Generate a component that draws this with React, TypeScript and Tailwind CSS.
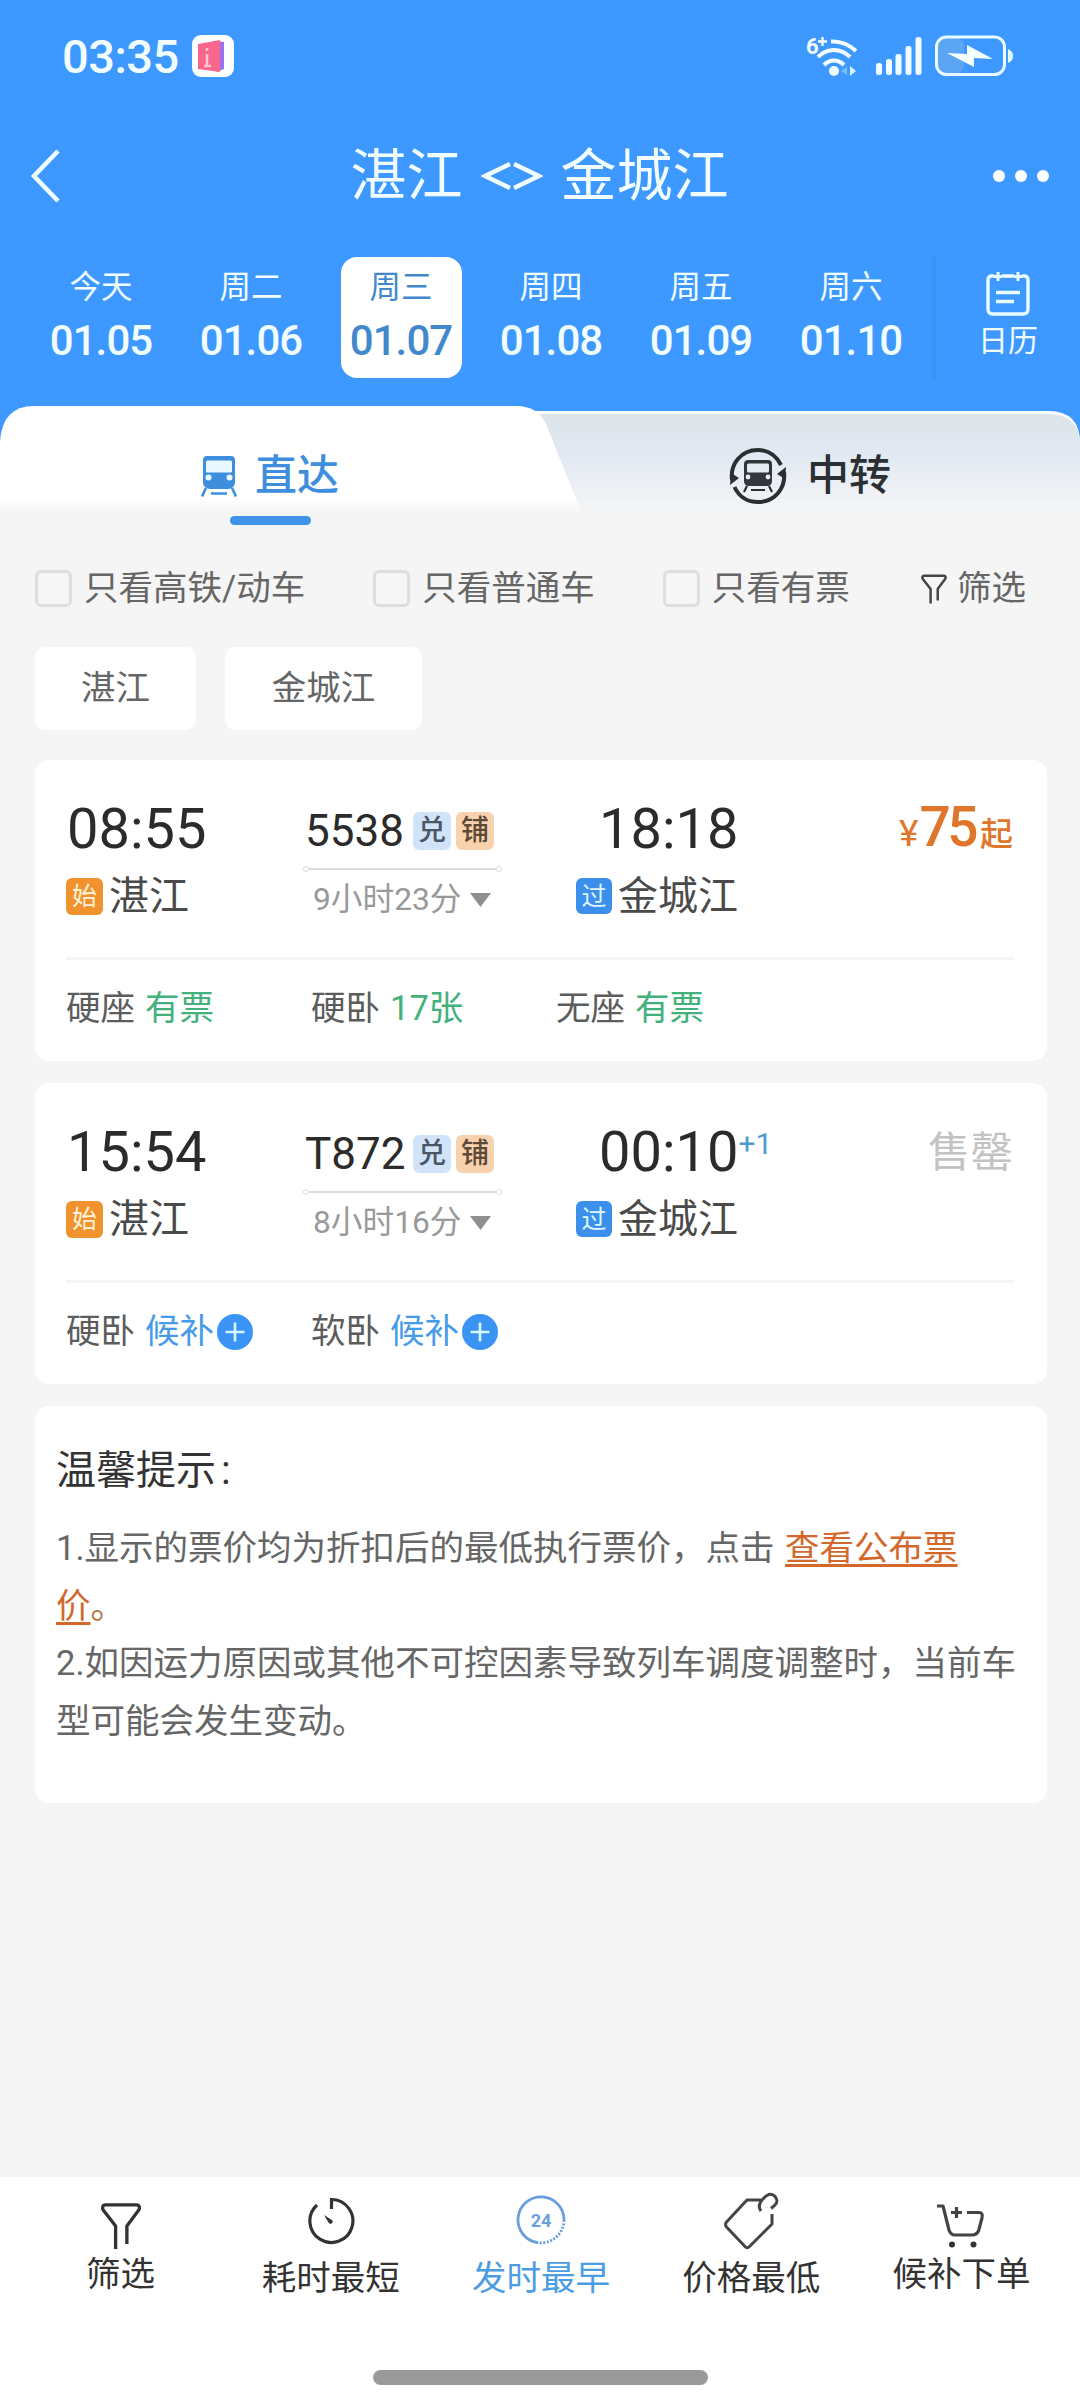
import React, { useState } from 'react';

type Seat = { name: string; value: string; waitlist?: boolean };

type Train = {
  code: string;
  depart: string;
  arrive: string;
  nextDay?: boolean;
  duration: string;
  price?: number;
  seats: Seat[];
};

const days = [
  { label: '今天', date: '01.05' },
  { label: '周二', date: '01.06' },
  { label: '周三', date: '01.07' },
  { label: '周四', date: '01.08' },
  { label: '周五', date: '01.09' },
  { label: '周六', date: '01.10' },
];

const trains: Train[] = [
  {
    code: '5538',
    depart: '08:55',
    arrive: '18:18',
    duration: '9小时23分',
    price: 75,
    seats: [
      { name: '硬座', value: '有票' },
      { name: '硬卧', value: '17张' },
      { name: '无座', value: '有票' },
    ],
  },
  {
    code: 'T872',
    depart: '15:54',
    arrive: '00:10',
    nextDay: true,
    duration: '8小时16分',
    seats: [
      { name: '硬卧', value: '候补', waitlist: true },
      { name: '软卧', value: '候补', waitlist: true },
    ],
  },
];

function WifiIcon() {
  return (
    <svg width="52" height="42" viewBox="0 0 52 42" fill="none" stroke="#f2fdff" strokeWidth="4">
      <path d="M25 6.500C34 6 43 9.500 50 16" />
      <path d="M12 22C21 12.500 35 12.500 44 22" />
      <path d="M18 30C24 24 32 24 38 30" />
      <circle cx="28" cy="36" r="5" fill="#f2fdff" stroke="none" />
      <path d="M41 32v8l-6-4z" fill="#7fbcfb" stroke="none" />
      <path d="M44 31l6 5-6 5z" fill="#d5f2ff" stroke="none" />
      <text x="0" y="19" fontSize="22" fontWeight="700" fill="#f2fdff" stroke="none" fontFamily="Roboto">6</text>
      <path d="M12 6.500h9M16.500 2v9" strokeWidth="2.500" />
    </svg>
  );
}

function SignalIcon() {
  return (
    <svg width="46" height="38" viewBox="0 0 46 38" fill="#f2fdff">
      <rect x="0" y="26" width="6" height="12" rx="2.500" />
      <rect x="10" y="22" width="6" height="16" rx="2.500" />
      <rect x="19.500" y="17" width="6" height="21" rx="2.500" />
      <rect x="29.500" y="9" width="6" height="29" rx="2.500" />
      <rect x="39.500" y="0" width="6" height="38" rx="2.500" />
    </svg>
  );
}

function BatteryIcon() {
  return (
    <svg width="78" height="42" viewBox="0 0 78 42" fill="none">
      <rect x="3" y="3" width="26" height="35" rx="8" fill="#5ba5f3" />
      <rect x="1.500" y="2" width="68" height="37.500" rx="10" stroke="#e8fbff" strokeWidth="3" />
      <path d="M73 14c4 2 5 4 5 7s-1 5-5 7z" fill="#e8fbff" />
      <path d="M12 18l20 1V10l26 14-19-1v9z" fill="#f6ffff" />
    </svg>
  );
}

function TrainIcon({ className, hole }: { className?: string; hole: string }) {
  return (
    <svg className={className} viewBox="0 0 36 41" fill="none">
      <path d="M6 0h24c3 0 4 2 4 4v22c0 4-3 7-7 7H9c-4 0-7-3-7-7V4c0-2 1-4 4-4z" fill="currentColor" />
      <rect x="5" y="4.500" width="26" height="12" rx="1.500" fill={hole} />
      <circle cx="7.500" cy="21.500" r="3" fill={hole} />
      <circle cx="28.500" cy="21.500" r="3" fill={hole} />
      <path d="M5 32L1 40.500M31 32l4 8.500M10 37.500h16" stroke="currentColor" strokeWidth="2.600" />
    </svg>
  );
}

function TransferIcon() {
  return (
    <svg width="58" height="58" viewBox="0 0 58 58" fill="none" stroke="#2b2f33" strokeWidth="4">
      <path d="M3 33C1 17 12 3 29 3c10 0 18 5.500 23 15" />
      <path d="M55 25c2 16-9 30-26 30C19 55 10 50 5.500 40" />
      <path d="M1 38l1-12 8 5z" fill="#2b2f33" stroke="none" />
      <path d="M57 20l-1 12-8-5z" fill="#2b2f33" stroke="none" />
      <path d="M19 13h20c2.500 0 4 1.500 4 4v17c0 3-2 5-5 5H20c-3 0-5-2-5-5V17c0-2.500 1.500-4 4-4z" fill="#33373b" stroke="none" />
      <rect x="18" y="16.500" width="22" height="9" rx="1.500" fill="#e6ebf2" stroke="none" />
      <circle cx="19" cy="30" r="2.400" fill="#e6ebf2" stroke="none" />
      <circle cx="39" cy="30" r="2.400" fill="#e6ebf2" stroke="none" />
      <path d="M18 39l-3 6M40 39l3 6M22 43h14" strokeWidth="2.200" />
    </svg>
  );
}

function FunnelIcon({ className, strokeWidth }: { className?: string; strokeWidth: number }) {
  return (
    <svg
      className={className}
      viewBox="0 0 42 47"
      fill="none"
      stroke="currentColor"
      strokeWidth={strokeWidth}
      strokeLinejoin="round"
    >
      <path d="M15.500 47V23.500L3 7.500C1.500 5 2 2 5 2h32c3 0 3.500 3 2 5.500L27 23.500V42" />
    </svg>
  );
}

function CalendarIcon() {
  return (
    <svg width="44" height="44" viewBox="0 0 44 44" fill="none" stroke="#e9fcff" strokeWidth="3.400">
      <path d="M8 4H6C3.500 4 2 5.500 2 8v29c0 3 1.500 5 5 5h30c3.500 0 5-2 5-5V8c0-2.500-1.500-4-4-4h-2M16 4h12" />
      <path d="M8 4.500h8M28 4.500h8M12 0v9M32 0v9" strokeWidth="3" />
      <path d="M10 20.500h24M10 29.500h18" />
    </svg>
  );
}

function StopwatchIcon() {
  return (
    <svg width="48" height="48" viewBox="0 0 48 48" fill="none" stroke="#333" strokeWidth="3.200">
      <path d="M24.500 12V2.500A21.500 21.500 0 1 1 10 8" />
      <path d="M17 18l4.500 7.500a2 2 0 0 0 4-2z" fill="#333" stroke="none" />
    </svg>
  );
}

function Clock24Icon() {
  return (
    <svg width="50" height="50" viewBox="0 0 50 50" fill="none" stroke="#6b9fdc" strokeWidth="2.800">
      <path d="M21 47.500A23 23 0 1 1 48 25" />
      <path d="M48 25A23 23 0 0 1 21 47.500" strokeDasharray="2 1.500" />
      <text x="25" y="31.500" textAnchor="middle" fontSize="18" fontWeight="700" fill="#6b9fdc" stroke="none" fontFamily="Roboto">24</text>
    </svg>
  );
}

function TagIcon() {
  return (
    <svg width="56" height="58" viewBox="0 0 56 58" fill="none" stroke="#444" strokeWidth="3" strokeLinejoin="round">
      <path d="M38 8H24L3.500 30c-1.500 2-1.500 3 0 5L22 54.500c1.500 1.500 3 1.500 4.500 0L49 32V22" />
      <path d="M38 19c-3-4-2-8 2-12 4-5 8-6 11.500-3s3 7 0 9.500l-3.500 3" />
    </svg>
  );
}

function CartIcon() {
  return (
    <svg width="48" height="44" viewBox="0 0 48 44" fill="none" stroke="#444" strokeWidth="3.200" strokeLinejoin="round">
      <path d="M0 2h6l6 24c1 3 3 5 6 5h17c3 0 5-1 6.500-4L45 14c1-4-.5-5.500-3-5.500H30" />
      <path d="M14 8.500h11M19.500 3v11" />
      <circle cx="15" cy="40.500" r="3" fill="#333" stroke="none" />
      <circle cx="36.500" cy="40.500" r="3" fill="#333" stroke="none" />
    </svg>
  );
}

function Checkbox({ label }: { label: string }) {
  return (
    <label className="flex items-center gap-3">
      <span className="h-[37px] w-[37px] rounded-md border-[3px] border-[#dedede] bg-[#f6f6f6]" />
      <span className="leading-none">{label}</span>
    </label>
  );
}

function TrainCard({ train }: { train: Train }) {
  return (
    <div className="flex h-[301px] flex-col rounded-[14px] bg-white pl-[31px] pr-[34px]">
      <div className="flex h-[197px] pt-[40px]">
        <div className="w-[237px]">
          <div className="flex h-[56px] items-center pl-px pt-0.5 text-[56px] leading-none text-[#2b2b2b]">{train.depart}</div>
          <div className="mt-[21px] flex h-[38px] items-center gap-1.5">
            <span className="flex h-[37px] w-[37px] items-center justify-center rounded-md bg-[#f0932f] text-[25px] leading-none text-[#fff3dc]">
              始
            </span>
            <span className="pt-0.5 text-[40px] leading-none text-[#4a4a4a]">湛江</span>
          </div>
        </div>

        <div className="w-[273px]">
          <div className="flex h-[62px] items-center pl-0.5">
            <span className="w-[108px] text-[44px] leading-none text-[#2b2b2b]">{train.code}</span>
            <span className="flex h-[38px] w-[38px] items-center justify-center rounded-md bg-[#d0e3f9] text-[28px] font-medium leading-none text-[#4a5664]">
              兑
            </span>
            <span className="ml-[5px] flex h-[38px] w-[38px] items-center justify-center rounded-md bg-[#f8d2ae] text-[28px] font-medium leading-none text-[#5d4936]">
              铺
            </span>
          </div>
          <div className="mt-1 flex w-[199px] items-center">
            <span className="h-1.5 w-1.5 rounded-full border border-[#dcdcdc]" />
            <span className="h-0.5 flex-1 bg-[#dcdcdc]" />
            <span className="h-1.5 w-1.5 rounded-full border border-[#dcdcdc]" />
          </div>
          <div className="flex items-center gap-2 pl-2.5 pt-3 text-[31.700px] leading-none text-[#999]">
            <span>{train.duration}</span>
            <svg width="21" height="14" viewBox="0 0 21 14" fill="#8f8f8f">
              <path d="M0 0h21L10.500 14z" />
            </svg>
          </div>
        </div>

        <div className="flex-1">
          <div className="flex h-[56px] items-center pl-[23px] pt-0.5 text-[56px] leading-none text-[#2b2b2b]">
            {train.arrive}
            {train.nextDay && <span className="mb-4 text-[30px] leading-none text-[#4f9bd0]">+1</span>}
          </div>
          <div className="mt-[21px] flex h-[38px] items-center gap-1.5">
            <span className="flex h-[36px] w-[36px] items-center justify-center rounded-md bg-[#3c90ec] text-[25px] leading-none text-[#dff6ff]">
              过
            </span>
            <span className="pt-0.5 text-[40px] leading-none text-[#4a4a4a]">金城江</span>
          </div>
        </div>

        {train.price ? (
          <div className="flex h-[56px] items-baseline text-[#df762b]">
            <span className="pr-px text-[37px] leading-none">¥</span>
            <span className="text-[55px] font-medium leading-none tracking-[-3.500px]">{train.price}</span>
            <span className="pl-[5px] text-[33px] font-medium leading-none">起</span>
          </div>
        ) : (
          <div className="flex h-[56px] items-center pt-1 text-[42.500px] leading-none text-[#c3c3c3]">售罄</div>
        )}
      </div>

      <div className="h-[3px] bg-[#f5f5f5]" />

      <div className="flex h-[96px] items-center pt-px text-[34.5px] leading-none">
        {train.seats.map((seat) => (
          <div key={seat.name} className="flex w-[245px] items-center">
            <span className="text-[#5c5c5c]">{seat.name}</span>
            {seat.waitlist ? (
              <>
                <span className="ml-2.5 text-[#459be8]">{seat.value}</span>
                <svg className="ml-[3px]" width="36" height="36" viewBox="0 0 36 36" fill="none">
                  <circle cx="18" cy="18" r="18" fill="#3a93f5" />
                  <path d="M8.500 18h19M18 8.500v19" stroke="#d9f6ff" strokeWidth="2.600" />
                </svg>
              </>
            ) : (
              <span className="ml-2.5 text-[#42b17c]">{seat.value}</span>
            )}
          </div>
        ))}
      </div>
    </div>
  );
}

export default function App() {
  const [selected, setSelected] = useState('01.07');

  return (
    <div className="flex h-[2403px] w-[1080px] flex-col overflow-hidden bg-[#f5f5f5] font-[Roboto,'Noto_Sans_CJK_SC',sans-serif]">
      {/* Header */}
      <header className="h-[406px] shrink-0 bg-[#3d99ff] text-[#f2fdff]">
        <div className="flex h-[112px] items-center pl-[62px] pr-[67px]">
          <span className="w-[118px] text-[47px] font-medium leading-none tracking-[-0.500px]">03:35</span>
          <svg className="ml-3" width="42" height="42" viewBox="0 0 42 42">
            <rect width="42" height="42" rx="9" fill="#fff" />
            <path d="M24 6l8 1v27l-8 3z" fill="#9a70ee" />
            <path d="M6 9l22-4v32L6 34z" fill="#f9668c" />
            <path d="M15 13v3M15 19v12M12 31h7" stroke="#ffc4d2" strokeWidth="2.600" />
          </svg>
          <div className="flex-1" />
          <WifiIcon />
          <div className="w-[18px]" />
          <SignalIcon />
          <div className="w-[13px]" />
          <BatteryIcon />
        </div>

        <div className="flex h-[128px] items-center justify-between pl-[30px] pr-[31px]">
          <svg width="30" height="54" viewBox="0 0 30 54" fill="none" stroke="#f2fdff" strokeWidth="4.500">
            <path d="M28 2L4 27l24 25" />
          </svg>
          <h1 className="flex items-center gap-[18px] pl-7 text-[56px] leading-none">
            <span>湛江</span>
            <svg width="62" height="28" viewBox="0 0 62 28" fill="none" stroke="#f2fdff" strokeWidth="4.500">
              <path d="M29 2L4 14l25 12M33 2l25 12-25 12" />
            </svg>
            <span>金城江</span>
          </h1>
          <svg width="58" height="14" viewBox="0 0 58 14" fill="#fff">
            <circle cx="8" cy="7" r="6" />
            <circle cx="30" cy="7" r="6" />
            <circle cx="52" cy="7" r="6" />
          </svg>
        </div>

        <div className="flex pl-[26px] pt-[17px]">
          {days.map((day) => (
            <div key={day.date} className="flex w-[150px] justify-center">
              <button
                onClick={() => setSelected(day.date)}
                className={
                  selected === day.date
                    ? 'flex h-[121px] w-[121px] flex-col items-center rounded-2xl bg-white pt-[15px] text-[#4288cc]'
                    : 'flex h-[121px] w-[121px] flex-col items-center pt-[15px]'
                }
              >
                <span className="text-[31.5px] leading-8">{day.label}</span>
                <span className="mt-4 text-[42px] font-medium leading-[42px] tracking-[-0.900px]">{day.date}</span>
              </button>
            </div>
          ))}
          <div className="ml-1 h-[124px] w-1.5 bg-linear-to-r from-[#3d99ff] to-[#3790f2]" />
          <div className="flex flex-1 flex-col items-center pt-[15px]">
            <CalendarIcon />
            <span className="mt-[9px] text-[30px] leading-8">日历</span>
          </div>
        </div>
      </header>

      {/* Tabs */}
      <div className="relative flex h-[136px] shrink-0">
        <svg className="absolute left-0 top-0" width="1080" height="136" viewBox="0 0 1080 136">
          <defs>
            <linearGradient id="inactive" x1="0" y1="0" x2="0" y2="1">
              <stop offset="0" stopColor="#dde3e9" />
              <stop offset="0.400" stopColor="#e2e9f2" />
              <stop offset="1" stopColor="#f4f5f6" />
            </linearGradient>
            <linearGradient id="active" x1="0" y1="0" x2="0" y2="1">
              <stop offset="0.850" stopColor="#fff" />
              <stop offset="1" stopColor="#f5f5f5" />
            </linearGradient>
          </defs>
          <rect width="1080" height="40" fill="#3d99ff" />
          <path d="M400 5h648q32 0 32 32v70H400z" fill="#fff" />
          <path d="M400 8h648q32 0 32 32v68H400z" fill="url(#inactive)" />
          <path d="M0 36Q2 0 34 0h482q22 0 30 18l36 90H0z" fill="url(#active)" />
        </svg>
        <div className="relative flex w-[540px] flex-col items-center">
          <div className="flex h-[110px] items-center pt-[30px] text-[42px] font-medium leading-none text-[#3d8fdd]">
            <TrainIcon className="mr-[18px] h-[41px] w-[36px]" hole="#e9f8ff" />
            <span>直达</span>
          </div>
          <div className="h-[9px] w-[81px] rounded-full bg-[#3f93e8]" />
        </div>
        <div className="relative flex h-[110px] flex-1 items-center justify-center pt-[30px] text-[42px] font-medium leading-none text-[#2b2f33]">
          <TransferIcon />
          <span className="ml-5">中转</span>
        </div>
      </div>

      {/* Filters */}
      <div className="flex h-[93px] shrink-0 items-center pl-[35px] pr-[54px] text-[34.5px] text-[#666]">
        <Checkbox label="只看高铁/动车" />
        <div className="w-[68px]" />
        <Checkbox label="只看普通车" />
        <div className="w-[68px]" />
        <Checkbox label="只看有票" />
        <div className="flex flex-1 items-center justify-end gap-2.5 leading-none">
          <FunnelIcon className="h-[30px] w-[26px] text-[#444]" strokeWidth={4} />
          <span>筛选</span>
        </div>
      </div>

      <div className="flex shrink-0 gap-[29px] px-[35px] pt-3 text-[34.5px] leading-none text-[#666]">
        <button className="h-[83px] w-[161px] rounded-[10px] bg-white">湛江</button>
        <button className="h-[83px] w-[197px] rounded-[10px] bg-white">金城江</button>
      </div>

      {/* Train list */}
      <main className="flex flex-1 flex-col gap-[22px] pl-[35px] pr-[33px] pt-[30px]">
        {trains.map((train) => (
          <TrainCard key={train.code} train={train} />
        ))}

        <div className="h-[397px] rounded-[14px] bg-white px-[21px] pt-[42px]">
          <h2 className="text-[40px] leading-[46px] text-[#333]">
            温馨提示<span className="pl-[5px]">:</span>
          </h2>
          <div className="whitespace-nowrap pt-[26px] text-[34.5px] leading-[57.700px] text-[#666]">
            <p>
              1.显示的票价均为折扣后的最低执行票价，点击<span className="pl-0.5"> </span>
              <a className="text-[#d4682c] underline decoration-[2.500px] underline-offset-4">
                查看公布票
                <br />价
              </a>
              <span className="text-[#b5713f]">。</span>
            </p>
            <p>
              2.如因运力原因或其他不可控因素导致列车调度调整时，当前车
              <br />
              型可能会发生变动。
            </p>
          </div>
        </div>
      </main>

      {/* Sort bar */}
      <nav className="flex h-[226px] shrink-0 flex-col items-center bg-white">
        <div className="flex h-[193px] w-[1053px] pl-0.5 text-[34.5px] leading-[36px] text-[#333]">
          <div className="flex flex-1 flex-col items-center pt-[26px]">
            <FunnelIcon className="h-[46px] w-[42px] text-[#333]" strokeWidth={3.4} />
            <span className="mt-[7px]">筛选</span>
          </div>
          <div className="flex flex-1 flex-col items-center pt-[20px]">
            <StopwatchIcon />
            <span className="mt-[15px]">耗时最短</span>
          </div>
          <div className="flex flex-1 flex-col items-center pt-[18px] text-[#4b9ce2]">
            <Clock24Icon />
            <span className="mt-[15px]">发时最早</span>
          </div>
          <div className="flex flex-1 flex-col items-center pt-[15px]">
            <TagIcon />
            <span className="mt-2.5">价格最低</span>
          </div>
          <div className="flex flex-1 flex-col items-center pt-[27px]">
            <CartIcon />
            <span className="mt-2">候补下单</span>
          </div>
        </div>
        <div className="h-[15px] w-[335px] rounded-full bg-[#9a9a9a]" />
      </nav>
    </div>
  );
}
